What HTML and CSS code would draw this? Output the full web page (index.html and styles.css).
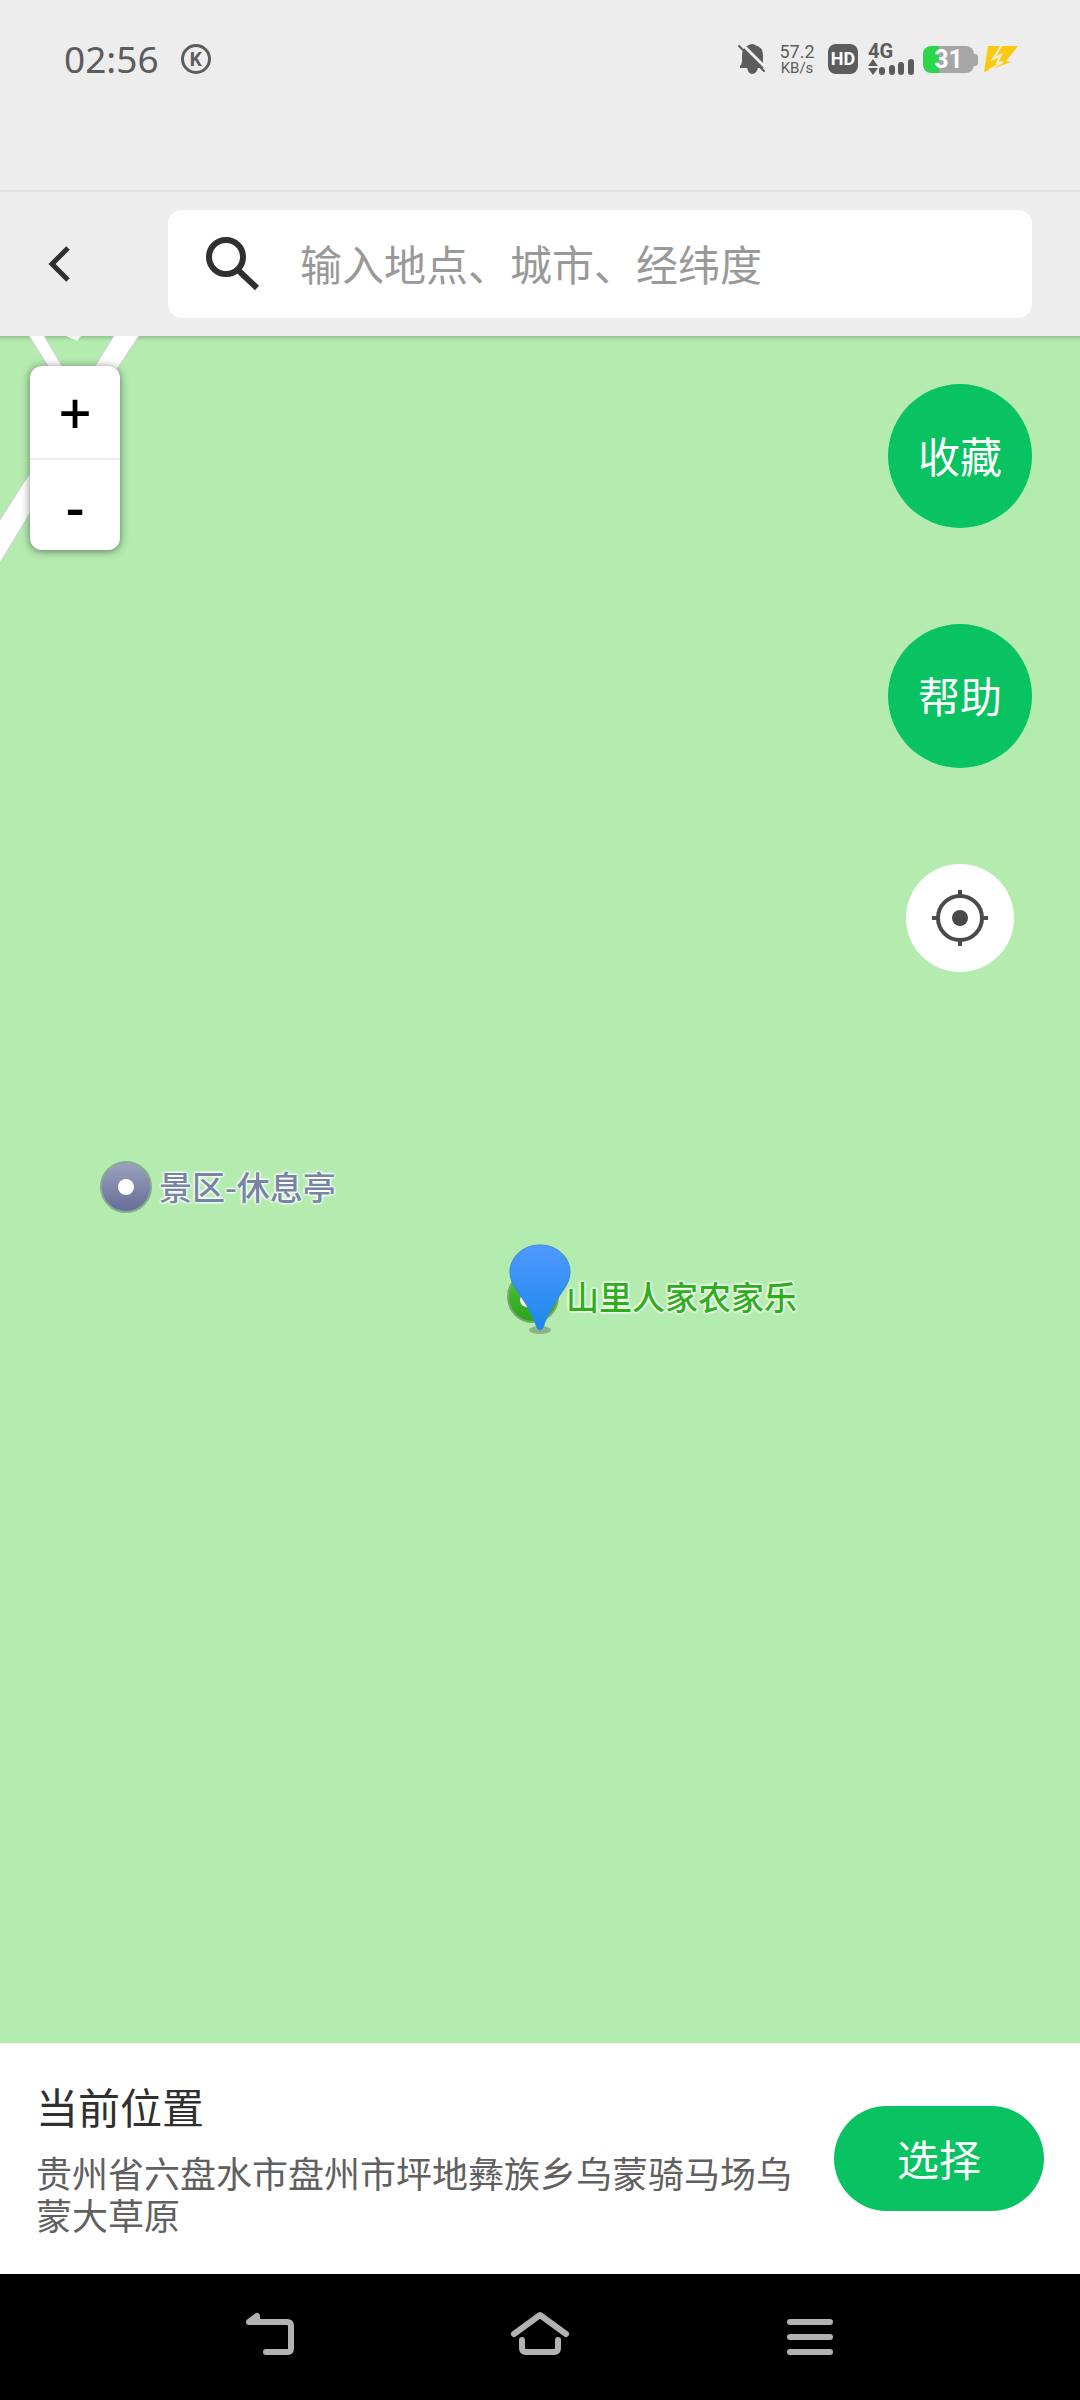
FILE: index.html
```html
<!DOCTYPE html>
<html lang="zh-CN">
<head>
    <meta charset="UTF-8">
    <meta name="viewport" content="width=device-width, initial-scale=1.0">
    <title>选择位置</title>
    <link rel="stylesheet" href="styles.css">
</head>
<body>
    <div class="app">
      <div class="status-bar">
        <div class="status-left">
          <span class="time">02:56</span>
          <span class="k-badge">K</span>
        </div>
        <div class="status-right">
          <svg class="bell" viewBox="0 0 28 32" width="28" height="32">
            <path d="M2 25 V23 Q4 21 4 18 V13 Q4 4 11 2 Q14 0 17 2 Q25 4 25 12 V20 Q25 22 27 25 Z" fill="#5c5c5c"/>
            <path d="M9 24 H20 Q19 31 14 31 Q10 31 9 24 Z" fill="#5c5c5c"/>
            <path d="M4 1 L30 27" stroke="#ededed" stroke-width="3"/>
            <path d="M1 3 L26 28" stroke="#5c5c5c" stroke-width="2" stroke-linecap="round"/>
          </svg>
          <div class="net-speed"><span>57.2</span><small>KB/s</small></div>
          <span class="hd">HD</span>
          <div class="signal">
            <span>4G</span>
            <svg viewBox="0 0 46 17" width="46" height="17">
              <path d="M0 7 L5 0 L10 7 Z M0 9 H10 L5 16 Z" fill="#5c5c5c"/>
              <path d="M14 11 V13 M24 9 V13 M33 6 V13 M43 3 V13" stroke="#5c5c5c" stroke-width="6" stroke-linecap="round"/>
            </svg>
          </div>
          <div class="battery"><span>31</span></div>
          <svg class="bolt" viewBox="0 0 36 28" width="36" height="28">
            <path d="M4 1 H34 L22 16 L27 17 L0 27 Z" fill="#fbc90e"/>
            <path d="M18 0 L9 14 L17 10 L13 18 L19 17 L5 25" fill="none" stroke="#f4efd8" stroke-width="2"/>
          </svg>
        </div>
      </div>

      <header class="header">
        <button class="back" type="button" aria-label="返回">
          <svg viewBox="0 0 24 38" width="24" height="38">
            <path d="M20 3 L4 19 L20 35" fill="none" stroke="#303030" stroke-width="5"/>
          </svg>
        </button>
        <label class="search">
          <svg viewBox="0 0 54 54" width="54" height="54">
            <circle cx="20" cy="20" r="17" fill="none" stroke="#303030" stroke-width="6"/>
            <path d="M33 34 L51 51" stroke="#303030" stroke-width="6"/>
          </svg>
          <input type="text" placeholder="输入地点、城市、经纬度" aria-label="搜索地点">
        </label>
      </header>

      <main class="map">
        <svg class="roads" viewBox="0 0 160 240" width="160" height="240">
          <g stroke="#d3cdd9">
            <path d="M28 -2 L48 30 L72 60 L84 50 L62 30 L43 -2 Z" fill="#fff"/>
            <path d="M115 -2 L95 30 L76 60 L98 64 L119 30 L140 -2 Z" fill="#fff"/>
            <path d="M-2 187 L30 137 L60 90 V130 L30 177 L-2 230 Z" fill="#fff"/>
          </g>
          <path d="M66 0 H81 L77 5 Z" fill="#f2f7f2"/>
        </svg>

        <div class="zoom">
          <button type="button" aria-label="放大">+</button>
          <button type="button" aria-label="缩小">-</button>
        </div>

        <div class="tools">
          <button class="round" type="button">收藏</button>
          <button class="round" type="button">帮助</button>
          <button class="locate" type="button" aria-label="定位">
            <svg viewBox="0 0 56 56" width="56" height="56">
              <circle cx="28" cy="28" r="22" fill="none" stroke="#4a4a4a" stroke-width="4"/>
              <circle cx="28" cy="28" r="8" fill="#4a4a4a"/>
              <path d="M28 0 V6 M28 50 V56 M0 28 H6 M50 28 H56" stroke="#4a4a4a" stroke-width="4"/>
            </svg>
          </button>
        </div>

        <div class="poi poi-rest"><i class="dot"></i><span>景区-休息亭</span></div>
        <div class="poi poi-farm"><i class="dot"></i><span>山里人家农家乐</span></div>

        <svg class="pin" viewBox="0 0 62 92" width="62" height="92">
          <defs>
            <linearGradient id="pin-fill" x1="0" y1="0" x2="0" y2="1">
              <stop offset="0" stop-color="#5099fe"/>
              <stop offset="1" stop-color="#1c88ec"/>
            </linearGradient>
          </defs>
          <ellipse cx="31" cy="86" rx="11" ry="4" fill="#8ab386"/>
          <path d="M31 1 C14 1 1 13 1 28 C1 38 7 45 13 54 C21 66 25 74 28 84 Q31 88 34 84 C37 74 41 66 49 54 C55 45 61 38 61 28 C61 13 48 1 31 1 Z" fill="url(#pin-fill)" stroke="#3b85dc"/>
        </svg>
      </main>

      <section class="location">
        <div class="location-text">
          <h1>当前位置</h1>
          <p>贵州省六盘水市盘州市坪地彝族乡乌蒙骑马场乌蒙大草原</p>
        </div>
        <button class="choose" type="button">选择</button>
      </section>

      <nav class="nav-bar">
        <button type="button" aria-label="返回">
          <svg viewBox="0 0 60 48" width="60" height="48">
            <path d="M26 42 H48 Q51 42 51 38 V16 Q51 12 47 12 H9 L17 6 V9" />
          </svg>
        </button>
        <button type="button" aria-label="主屏幕">
          <svg viewBox="0 0 60 48" width="60" height="48">
            <path d="M4 24 L30 5 L56 24 M12 30 V38 Q12 42 16 42 H44 Q48 42 48 38 V30" />
          </svg>
        </button>
        <button type="button" aria-label="最近任务">
          <svg viewBox="0 0 60 48" width="60" height="48">
            <path d="M10 12 H50 M10 27 H50 M10 42 H50" />
          </svg>
        </button>
      </nav>
    </div>
</body>
</html>
```

FILE: styles.css
```css
* {
  box-sizing: border-box;
}

body {
  margin: 0;
  background: #ededed;
  font-family: "Noto Sans CJK SC", "Noto Sans", sans-serif;
}

button {
  border: none;
  padding: 0;
  font-family: inherit;
  cursor: pointer;
}

svg {
  display: block;
  flex: none;
}

.app {
  min-height: 100vh;
  display: flex;
  flex-direction: column;
}

/* status bar */
.status-bar {
  height: 192px;
  padding: 40px 60px 0 64px;
  border-bottom: 2px solid #e0e0e0;
  display: flex;
  justify-content: space-between;
  align-items: flex-start;
  color: #5c5c5c;
}

.status-left,
.status-right {
  height: 38px;
  display: flex;
  align-items: center;
}

.status-left {
  gap: 22px;
}

.time {
  font-family: "Noto Sans", sans-serif;
  font-size: 37px;
  line-height: 38px;
}

.k-badge {
  width: 30px;
  height: 30px;
  border: 3px solid #5c5c5c;
  border-radius: 50%;
  font: bold 19px/24px "Noto Sans", sans-serif;
  text-align: center;
}

.net-speed {
  width: 38px;
  margin-left: 12px;
  display: flex;
  flex-direction: column;
  font-family: Roboto, sans-serif;
  font-size: 18px;
  line-height: 18px;
  text-align: center;
}

.net-speed small {
  font-size: 15px;
  line-height: 15px;
}

.hd {
  width: 30px;
  height: 30px;
  margin-left: 12px;
  border-radius: 8px;
  background: #5c5c5c;
  color: #fff;
  font: bold 18px/30px Roboto, sans-serif;
  text-align: center;
}

.signal {
  width: 46px;
  margin-left: 10px;
  font: bold 20px/16px Roboto, sans-serif;
}

.signal span {
  display: block;
}

.battery {
  position: relative;
  width: 51px;
  height: 27px;
  margin-left: 9px;
  border-radius: 8px;
  background: linear-gradient(to right, #2bd64b 31%, #a6a6a6 31%);
  color: #fff;
  font: bold 25px/27px Roboto, sans-serif;
  text-align: center;
}

.battery::after {
  content: "";
  position: absolute;
  left: 100%;
  top: 8px;
  width: 4px;
  height: 12px;
  border-radius: 0 3px 3px 0;
  background: #a6a6a6;
}

.bolt {
  margin-left: 10px;
}

/* search header */
.header {
  padding: 18px 48px 18px 0;
  display: flex;
  align-items: center;
}

.back {
  width: 168px;
  height: 108px;
  padding-left: 48px;
  background: none;
}

.search {
  flex: 1;
  height: 108px;
  padding: 0 38px;
  display: flex;
  align-items: center;
  gap: 40px;
  border-radius: 14px;
  background: #fff;
}

.search input {
  flex: 1;
  min-width: 0;
  padding: 0 0 4px;
  border: none;
  outline: none;
  background: none;
  font-family: inherit;
  font-size: 42px;
  color: #303030;
}

.search input::placeholder {
  color: #999;
  opacity: 1;
}

/* map */
.map {
  position: relative;
  flex: 1;
  min-height: 1100px;
  overflow: hidden;
  background: #b4ecb0;
  box-shadow: inset 0 6px 4px -4px rgba(0, 0, 0, 0.2);
}

.roads {
  position: absolute;
  left: 0;
  top: 0;
}

.zoom {
  position: absolute;
  left: 30px;
  top: 30px;
  width: 90px;
  border-radius: 12px;
  background: #fff;
  box-shadow: 0 1px 8px rgba(0, 0, 0, 0.5);
}

.zoom button {
  display: block;
  width: 100%;
  height: 92px;
  background: none;
  color: #000;
  font: 500 58px/92px "Noto Sans", sans-serif;
}

.zoom button + button {
  border-top: 2px solid #ececec;
}

.tools {
  position: absolute;
  right: 48px;
  top: 48px;
  display: flex;
  flex-direction: column;
  align-items: center;
  gap: 96px;
}

.round {
  width: 144px;
  height: 144px;
  padding-bottom: 4px;
  border-radius: 50%;
  background: #09c262;
  color: #fff;
  font-size: 42px;
}

.locate {
  width: 108px;
  height: 108px;
  border-radius: 50%;
  background: #fff;
  display: flex;
  align-items: center;
  justify-content: center;
}

.poi {
  position: absolute;
  display: flex;
  align-items: center;
  gap: 7px;
  font-size: 33px;
  font-weight: 500;
  line-height: 50px;
  white-space: nowrap;
  text-shadow: 0 0 3px #fff, 0 0 3px #fff, 0 0 3px #fff, 0 0 3px #fff;
}

.poi span {
  padding-bottom: 2px;
}

.dot {
  width: 52px;
  height: 52px;
  border: 2px solid #86ac93;
  border-radius: 50%;
  display: flex;
  align-items: center;
  justify-content: center;
}

.dot::after {
  content: "";
  width: 16px;
  height: 16px;
  border-radius: 50%;
  background: #fff;
}

.poi-rest {
  left: 100px;
  top: 825px;
  color: #7785a5;
}

.poi-rest .dot {
  background: linear-gradient(#9ba1bd, #666d98);
}

.poi-farm {
  left: calc(50% - 33px);
  top: 935px;
  color: #2fae1b;
}

.poi-farm .dot {
  padding: 6px 12px 0 0;
  border-color: #79a671;
  background: linear-gradient(#52c33e, #2aa51b);
}

.poi-farm .dot::after {
  width: 14px;
  height: 14px;
}

.pin {
  position: absolute;
  left: calc(50% - 31px);
  top: 908px;
}

/* current location */
.location {
  padding: 33px 36px;
  display: flex;
  align-items: center;
  gap: 36px;
  background: #fff;
}

.location-text {
  flex: 1;
  padding-bottom: 6px;
}

.location h1 {
  margin: 0 0 15px;
  font-size: 42px;
  font-weight: 400;
  line-height: 60px;
  color: #303030;
}

.location p {
  margin: 0;
  font-size: 36px;
  line-height: 42px;
  color: #606060;
}

.choose {
  width: 210px;
  height: 105px;
  padding-bottom: 2px;
  border-radius: 53px;
  background: #09c262;
  color: #fff;
  font-size: 42px;
}

/* system navigation */
.nav-bar {
  height: 126px;
  padding: 0 12.5% 6px;
  display: flex;
  background: #000;
}

.nav-bar button {
  flex: 1;
  display: flex;
  align-items: center;
  justify-content: center;
  background: none;
}

.nav-bar path {
  fill: none;
  stroke: #b2b2b2;
  stroke-width: 6px;
  stroke-linecap: round;
  stroke-linejoin: round;
}
```
